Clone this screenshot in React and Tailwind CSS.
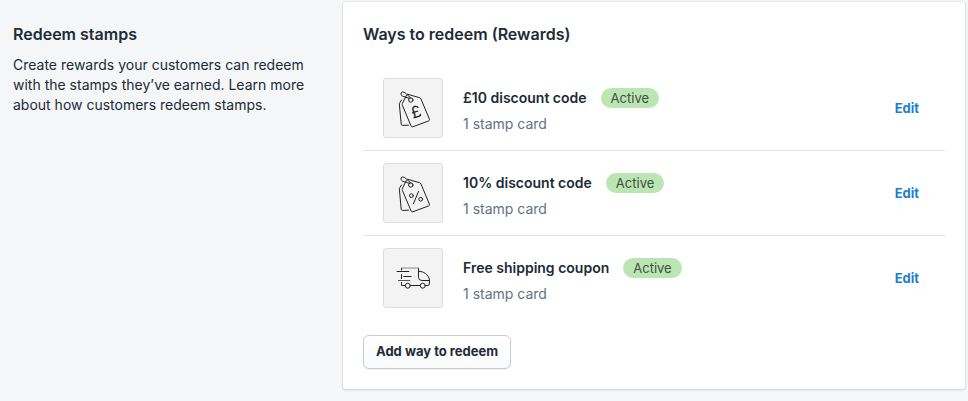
import React from "react";

const rewards = [
  { id: 1, name: "£10 discount code", cost: "1 stamp card", status: "Active", icon: PoundTagIcon },
  { id: 2, name: "10% discount code", cost: "1 stamp card", status: "Active", icon: PercentTagIcon },
  { id: 3, name: "Free shipping coupon", cost: "1 stamp card", status: "Active", icon: TruckIcon },
];

function IconFrame({ children }) {
  return (
    <svg
      viewBox="0 0 58 58"
      className="w-full h-full"
      fill="none"
      stroke="#222222"
      strokeWidth="1"
      strokeLinecap="round"
      strokeLinejoin="round"
      aria-hidden="true"
    >
      {children}
    </svg>
  );
}

function TagShape() {
  return (
    <>
      {/* back tag */}
      <path d="M17.5 21 L15.3 24.5 L17.2 45.2 Q17.4 46.4 18.6 46.4 L24.5 46.2" />
      {/* front tag */}
      <path d="M23.4 15.2 L35.6 18.7 Q36.6 19 37 20 L45.4 40.2 Q45.9 41.4 44.7 41.9 L28.8 47.8 Q27.6 48.2 27.1 47 L18.4 26.4 Q18 25.4 18.4 24.4 L22.4 16.4" />
      {/* string and hole */}
      <path d="M25.6 19.4 L18.6 17.2 Q16.2 15.8 17 14 Q18.4 11.9 20.8 13.6 L27 19.2" />
      <circle cx="26.8" cy="21" r="2.2" />
    </>
  );
}

function PoundTagIcon() {
  return (
    <IconFrame>
      <TagShape />
      <text
        x="32"
        y="38.5"
        textAnchor="middle"
        fontSize="16"
        fontFamily="Inter, sans-serif"
        fill="#222222"
        stroke="none"
        transform="rotate(-18 32 33)"
      >
        £
      </text>
    </IconFrame>
  );
}

function PercentTagIcon() {
  return (
    <IconFrame>
      <TagShape />
      <circle cx="27.4" cy="31.7" r="1.9" />
      <circle cx="36.7" cy="35.2" r="1.9" />
      <path d="M34.6 27.3 L29.4 39.7" />
    </IconFrame>
  );
}

function TruckIcon() {
  return (
    <IconFrame>
      <path d="M17.5 19 H34.5" stroke="#8a8a8a" />
      <path d="M17.5 21 V19.5 M34.5 19.5 V28.5 Q34.7 31.5 38 31.5 H45.6" />
      <path d="M34.5 22.4 C39.5 22 44.5 25.5 45.5 31 V34 Q45.3 36.5 43.8 36.5 H41.6" />
      <path d="M17.5 25.5 V29.5 M17.5 33.5 V36.5 H21.2" />
      <path d="M26.4 36.5 H36" />
      <path d="M13 22.5 H24.8 M19.7 27.5 H27.2" />
      <path d="M14.5 31.5 H25.8" stroke="#555555" />
      <circle cx="23.8" cy="36.7" r="2.5" />
      <circle cx="38.8" cy="36.7" r="2.5" />
    </IconFrame>
  );
}

function RewardRow({ reward }) {
  const Icon = reward.icon;

  return (
    <li className="flex items-center gap-5 px-5 py-3 border-b border-[#dfe3e8] last:border-b-0">
      <div className="w-15 h-15 shrink-0 rounded-[3px] border border-[#dddddd] bg-[#f3f3f3]">
        <Icon />
      </div>
      <div className="flex-1 pt-1.5">
        <div className="flex items-center gap-3.5 mb-1.5">
          <h3 className="text-sm font-semibold">{reward.name}</h3>
          <span className="rounded-full bg-[#bbe5b3] px-2.5 text-[13px] leading-5 text-[#414f3e]">
            {reward.status}
          </span>
        </div>
        <p className="text-sm text-[#637381]">{reward.cost}</p>
      </div>
      <a href="#" className="px-1.5 pt-0.5 text-[13px] font-bold text-[#1c7fcd] hover:underline">
        Edit
      </a>
    </li>
  );
}

export default function App() {
  return (
    <div className="min-h-screen bg-[#f4f6f8] pt-0.5 pr-[3px] pb-3 font-['Inter',sans-serif] text-[#212b36]">
      <div className="flex items-start">
        <section className="w-[343px] shrink-0 pt-5 pl-[13px] pr-8">
          <h2 className="text-base font-semibold">Redeem stamps</h2>
          <p className="mt-[9px] text-sm">
            Create rewards your customers can redeem with the stamps they’ve
            earned. Learn more about how customers redeem stamps.
          </p>
        </section>

        <section className="flex-1 rounded-[3px] bg-white p-5 shadow-[0_0_0_1px_rgba(63,63,68,0.05),0_1px_3px_0_rgba(63,63,68,0.15)]">
          <h2 className="text-base font-semibold">Ways to redeem (Rewards)</h2>

          <ul className="mt-5">
            {rewards.map((reward) => (
              <RewardRow key={reward.id} reward={reward} />
            ))}
          </ul>

          <button
            type="button"
            className="mt-[15px] h-[34px] rounded-md border border-[#c4cdd5] bg-linear-to-b from-white to-[#f9fafb] px-3 text-[13px] font-bold shadow-[0_1px_0_0_rgba(22,29,37,0.05)]"
          >
            Add way to redeem
          </button>
        </section>
      </div>
    </div>
  );
}
